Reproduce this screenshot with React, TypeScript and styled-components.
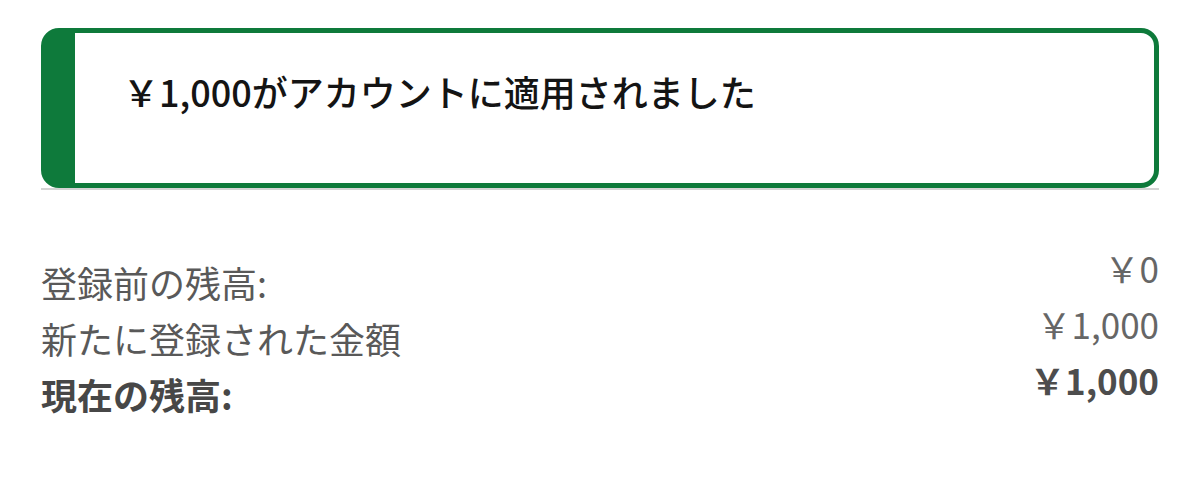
import styled, { createGlobalStyle } from "styled-components";

const GlobalStyle = createGlobalStyle`
  html, body {
    margin: 0;
    padding: 0;
    background: #ffffff;
  }
`;

const font = `"Noto Sans CJK JP", "Noto Sans", sans-serif`;

type Row = {
  label: string;
  value: string;
  strong?: boolean;
};

const rows: Row[] = [
  { label: "登録前の残高:", value: "￥0" },
  { label: "新たに登録された金額", value: "￥1,000" },
  { label: "現在の残高:", value: "￥1,000", strong: true },
];

export default function App() {
  return (
    <>
      <GlobalStyle />
      <Page>
        <NoticeWrap>
          <Notice>
            <NoticeText>￥1,000がアカウントに適用されました</NoticeText>
          </Notice>
        </NoticeWrap>

        <Summary>
          {rows.map((row) => (
            <SummaryRow key={row.label}>
              <Label $strong={row.strong}>{row.label}</Label>
              <Amount $strong={row.strong}>{row.value}</Amount>
            </SummaryRow>
          ))}
        </Summary>
      </Page>
    </>
  );
}

const Page = styled.main`
  width: 1200px;
  height: 478px;
  box-sizing: border-box;
  padding: 28px 41px 0;
  font-family: ${font};
`;

const NoticeWrap = styled.div`
  border-bottom: 2px solid #d4d4d4;
`;

const Notice = styled.div`
  box-sizing: border-box;
  height: 160px;
  border: 5px solid #0e7a3b;
  border-left-width: 34px;
  border-radius: 18px;
  padding: 36px 0 0 48px;
  background: #ffffff;
`;

const NoticeText = styled.p`
  margin: 0;
  font-family: ${font};
  font-size: 36px;
  line-height: 44px;
  font-weight: 500;
  color: #141414;
`;

const Summary = styled.section`
  margin-top: 64px;
  display: flex;
  flex-direction: column;
`;

const SummaryRow = styled.div`
  display: flex;
  justify-content: space-between;
  align-items: flex-start;
  height: 56px;
`;

const Label = styled.span<{ $strong?: boolean }>`
  font-family: ${font};
  font-size: 36px;
  line-height: 56px;
  font-weight: ${(p) => (p.$strong ? 700 : 400)};
  color: ${(p) => (p.$strong ? "#474747" : "#595959")};
`;

const Amount = styled.span<{ $strong?: boolean }>`
  font-family: ${font};
  font-size: 35px;
  line-height: 28px;
  font-weight: ${(p) => (p.$strong ? 700 : 400)};
  color: ${(p) => (p.$strong ? "#4d4d4d" : "#666666")};
`;
